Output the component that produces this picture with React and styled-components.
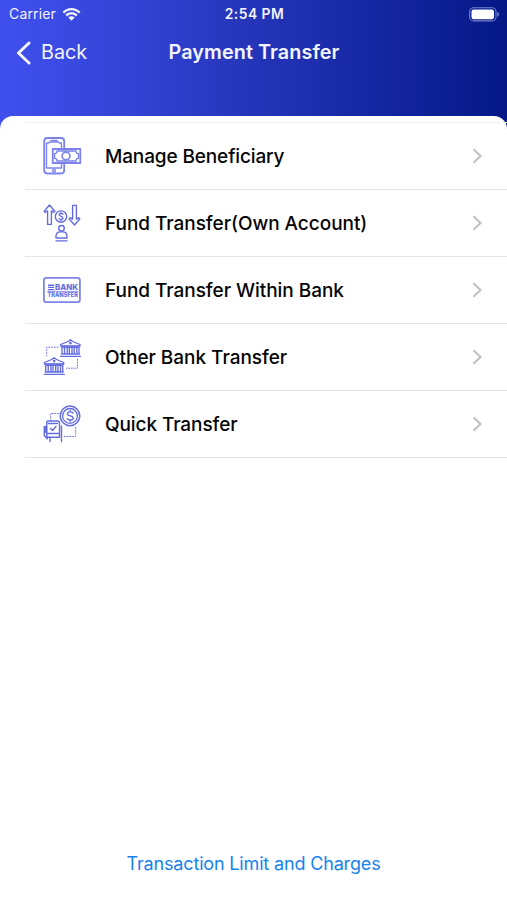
import React from "react";
import styled, { createGlobalStyle } from "styled-components";

const GlobalStyle = createGlobalStyle`
  * { box-sizing: border-box; }
  body { margin: 0; background: #fff; font-family: Inter, "Liberation Sans", sans-serif; }
`;

const Screen = styled.div`
  height: 900px;
  display: flex;
  flex-direction: column;
  overflow: hidden;
  color: #050505;
  background: #fff;
`;

const Header = styled.header`
  height: 130px;
  flex: none;
  color: #f3f4ff;
  background: linear-gradient(90deg, #4050ee 0%, #3444d6 24%, #2435b9 50%, #1425a0 76%, #051886 100%);
`;

const StatusBar = styled.div`
  height: 27px;
  display: grid;
  grid-template-columns: 1fr auto 1fr;
  align-items: center;
  padding: 1px 7px 0 9px;
`;

const Carrier = styled.div`
  display: flex;
  align-items: center;
  gap: 6px;
`;

const Label = styled.span`
  font-size: ${(p) => p.$size}px;
  font-weight: ${(p) => p.$weight || 400};
  letter-spacing: ${(p) => p.$spacing || 0}px;
  line-height: 1.2;
  white-space: nowrap;
`;

const BatteryIcon = styled.svg`
  justify-self: end;
`;

const NavBar = styled.nav`
  height: 51px;
  display: grid;
  grid-template-columns: 1fr auto 1fr;
  align-items: center;
  padding: 0 15px 0 16px;
`;

const BackButton = styled.button`
  display: flex;
  align-items: center;
  gap: 10px;
  padding: 0;
  border: 0;
  color: inherit;
  background: none;
  font: inherit;
`;

const Sheet = styled.main`
  flex: 1;
  display: flex;
  flex-direction: column;
  margin-top: -14.5px;
  padding-top: 6px;
  border-radius: 13px 13px 0 0;
  background: #fff;
`;

const Menu = styled.ul`
  list-style: none;
  margin: 0 0 0 25px;
  padding: 0;
  border-top: 1px solid #efefef;
`;

const MenuRow = styled.li`
  height: 67.15px;
  display: flex;
  align-items: center;
  padding: 0 24px 0 18px;
  border-bottom: 1px solid #e4e4e4;
`;

const RowLabel = styled(Label)`
  padding-top: 3px;
`;

const RowIcon = styled.svg`
  flex: none;
  width: 40px;
  height: 40px;
  margin-right: 22px;
  color: #646be0;
`;

const Chevron = styled.svg`
  margin-left: auto;
`;

const Footer = styled.footer`
  margin-top: auto;
  height: 73px;
  display: flex;
  justify-content: center;
  align-items: center;
  color: #1683ee;
`;

const stroke = { fill: "none", stroke: "currentColor", strokeWidth: 1.35, strokeLinejoin: "round", strokeLinecap: "round" };

const PhoneCash = () => (
  <g {...stroke} stroke="#7b82ea">
    <rect x="9.2" y="8" width="20" height="35.5" rx="3.2" strokeWidth="1.8" />
    <path d="M26.5 18V13h-2l-1-1h-9l-1 1h-2v25h15v-4" />
    <path d="M16 10.5h6" />
    <circle cx="19" cy="40.8" r="1.4" />
    <rect x="17.8" y="19" width="27.5" height="14" fill="#fff" strokeWidth="1.8" />
    <path d="M22 21h19c0 1.8.8 2.6 2.4 2.6v4.8c-1.6 0-2.4.8-2.4 2.6H22c0-1.8-.8-2.6-2.4-2.6v-4.8c1.6 0 2.4-.8 2.4-2.6z" />
    <circle cx="31" cy="26" r="3.9" fill="#fff" strokeWidth="1.7" />
  </g>
);

const OwnAccount = () => (
  <g {...stroke}>
    <path d="M14.5 8 9.2 14.2l1 1.2 2.4-1.5v13.5h3.8V13.9l2.4 1.5 1-1.2zM39.5 28l-5.3-6 1-1.4 2.4 1.6V8.3h3.8v13.9l2.4-1.6 1 1.4z" />
    <circle cx="26" cy="19.5" r="5.7" />
    <path d="M28 17.2c-.8-1-3.8-1-3.8.5 0 2 3.8 1.3 3.8 3.4 0 1.7-3 1.8-4 .5M26 15.4v1M26 22.5v1" />
    <circle cx="26.5" cy="31.3" r="2.8" />
    <path d="M21 41v-1.5c0-3 2-4.7 4.2-4.7h2.6c2.2 0 4.2 1.7 4.2 4.7V41zM21 43.8h11" />
  </g>
);

const IconText = styled.text`
  font-family: Inter, sans-serif;
  font-weight: 800;
  fill: currentColor;
`;

const BankCard = () => (
  <g {...stroke}>
    <rect x="8.9" y="13.8" width="36" height="24.4" rx="2.5" strokeWidth="1.8" stroke="#7f86e9" />
    <path d="M13 21.2h6.2M13 23.4h6.2M13 25.6h6.2" strokeWidth="1.4" strokeLinecap="butt" />
    <IconText x="20" y="26.4" fontSize="7.8" textLength="23" lengthAdjust="spacingAndGlyphs" stroke="none">BANK</IconText>
    <path d="M12.5 27.4h30.5" strokeWidth=".7" />
    <IconText x="12.4" y="32.7" fontSize="6" textLength="30.5" lengthAdjust="spacingAndGlyphs" stroke="none">TRANSFER</IconText>
  </g>
);

const Building = ({ x, y }) => (
  <g transform={`translate(${x} ${y})`}>
    <path fill="#fff" d="M.7 5.5 8 2.5 10.4.8l2.4 1.7L20 5.5V7H.7z" />
    <circle cx="10.4" cy="4" r=".7" />
    <path d="M2 7v8M4.5 7v8M7.2 7v8M9.3 7v8M12 7v8M14.2 7v8M16.8 7v8M19 7v8M2 8.3h17M1.5 15h18M.5 17.3h20" />
  </g>
);

const OtherBank = () => (
  <g {...stroke}>
    <path d="M23.5 16.2H11.7v9M42.5 28v9.2H31" strokeDasharray="1.7 1.1" strokeWidth="1" strokeLinecap="butt" />
    <Building x={25} y={8} />
    <Building x={8.7} y={26} />
  </g>
);

const QuickPay = () => (
  <g {...stroke}>
    <path d="M24 15.5h-8.3V22M40.7 29v9.5H29" strokeDasharray="1.7 1.1" strokeWidth="1" strokeLinecap="butt" />
    <circle cx="35" cy="17.9" r="9.8" strokeWidth="1.5" />
    <circle cx="35" cy="17.9" r="7.4" />
    <path d="M38 15c-1.1-1.6-5.6-1.5-5.6.7 0 2.9 5.8 1.5 5.8 4.3 0 2.4-4.6 2.6-6 .7M35.2 12.2v1.5M35.2 22v1.6" strokeWidth="1.4" />
    <path d="M13 23h9.5q2 0 2 2v10.5H11.8V24.2q0-1.2 1.2-1.2zM11.8 36v3.2h12.7V36M15 39v4.5M26.5 28v15.5M9.3 28.5v9l3 3.2M10.5 28.5v5.8M13.5 25.5h9" strokeWidth="1.4" />
    <path d="m15.5 30.5 2 2 3.5-4" />
  </g>
);

const items = [
  { label: "Manage Beneficiary", Icon: PhoneCash, spacing: -0.13 },
  { label: "Fund Transfer(Own Account)", Icon: OwnAccount, spacing: -0.04 },
  { label: "Fund Transfer Within Bank", Icon: BankCard, spacing: -0.04 },
  { label: "Other Bank Transfer", Icon: OtherBank, spacing: -0.03 },
  { label: "Quick Transfer", Icon: QuickPay, spacing: -0.09 },
];

export default function App() {
  return (
    <Screen>
      <GlobalStyle />
      <Header>
        <StatusBar>
          <Carrier>
            <Label $size={14} $spacing={0.15}>Carrier</Label>
            <svg width="19" height="14" viewBox="0 0 19 14" fill="currentColor">
              <path d="M0.5 4.8C5.6-.4 13.4-.4 18.5 4.8L16.8 6.5C12.6 2.3 6.4 2.3 2.2 6.5z" />
              <path d="M3.4 7.7c3.5-3.5 8.7-3.5 12.2 0l-1.7 1.7c-2.6-2.5-6.2-2.5-8.8 0z" />
              <path d="M6.3 10.5c1.9-1.8 4.5-1.8 6.4 0L9.5 13.7z" />
            </svg>
          </Carrier>
          <Label $size={13.8} $weight={600} $spacing={0.5}>2:54 PM</Label>
          <BatteryIcon width="31" height="15" viewBox="0 0 31 15">
            <rect x=".7" y=".7" width="26.3" height="13.2" rx="4" fill="none" stroke="#7785cd" strokeWidth="1.1" />
            <rect x="2.5" y="2.4" width="22.5" height="9.8" rx="2.2" fill="#fff" />
            <path d="M28.3 5c2.3.7 2.3 4 0 4.7z" fill="#7785cd" />
          </BatteryIcon>
        </StatusBar>
        <NavBar>
          <BackButton>
            <svg width="15" height="24" viewBox="0 0 15 24" fill="none" stroke="currentColor" strokeWidth="3" strokeLinecap="round" strokeLinejoin="round">
              <path d="M13 2 2.5 12 13 22" />
            </svg>
            <Label $size={19.8}>Back</Label>
          </BackButton>
          <Label as="h1" $size={19.8} $weight={600} $spacing={0.08}>Payment Transfer</Label>
        </NavBar>
      </Header>
      <Sheet>
        <Menu>
          {items.map(({ label, Icon, spacing }) => (
            <MenuRow key={label}>
              <RowIcon viewBox="8 6 40 40"><Icon /></RowIcon>
              <RowLabel $size={19} $weight={500} $spacing={spacing}>{label}</RowLabel>
              <Chevron width="11" height="16" viewBox="0 0 11 16" fill="none" stroke="#c2c2c3" strokeWidth="2.2">
                <path d="m1.5 1.2 7 6.8-7 6.8" />
              </Chevron>
            </MenuRow>
          ))}
        </Menu>
        <Footer><Label $size={18} $spacing={-0.16}>Transaction Limit and Charges</Label></Footer>
      </Sheet>
    </Screen>
  );
}
